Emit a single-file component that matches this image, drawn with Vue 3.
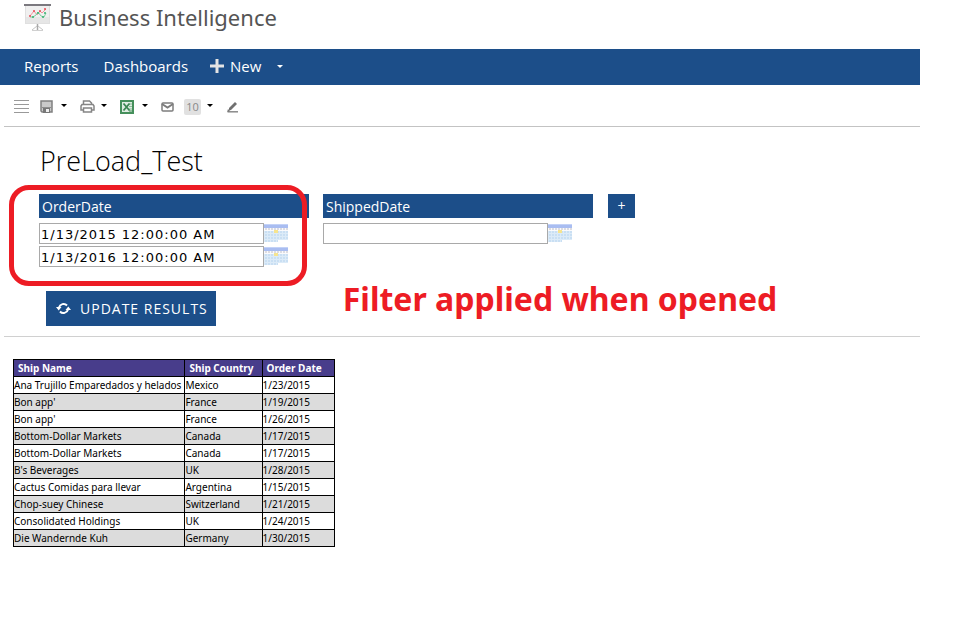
<script setup>
import { ref } from 'vue'

const filters = ref([
  { name: 'OrderDate', values: ['1/13/2015 12:00:00 AM', '1/13/2016 12:00:00 AM'] },
  { name: 'ShippedDate', values: [''] },
])

const columns = ['Ship Name', 'Ship Country', 'Order Date']
const rows = [
  ['Ana Trujillo Emparedados y helados', 'Mexico', '1/23/2015'],
  ["Bon app'", 'France', '1/19/2015'],
  ["Bon app'", 'France', '1/26/2015'],
  ['Bottom-Dollar Markets', 'Canada', '1/17/2015'],
  ['Bottom-Dollar Markets', 'Canada', '1/17/2015'],
  ["B's Beverages", 'UK', '1/28/2015'],
  ['Cactus Comidas para llevar', 'Argentina', '1/15/2015'],
  ['Chop-suey Chinese', 'Switzerland', '1/21/2015'],
  ['Consolidated Holdings', 'UK', '1/24/2015'],
  ['Die Wandernde Kuh', 'Germany', '1/30/2015'],
]
</script>

<template>
  <div class="page">
    <header class="brand">
      <svg class="brand-icon" width="27" height="28" viewBox="0 0 27 28" aria-hidden="true">
        <path d="M13.500 20v7" stroke="#a8a8a8" stroke-width="1.500" />
        <path d="M13 22l-5 4M14 22l5 4" stroke="#c4c4c4" fill="none" />
        <path d="M8 26.500h11" stroke="#d0d0d0" />
        <rect x="1.500" y="1.500" width="24" height="18" fill="#f0f0f0" stroke="#e0e0e0" />
        <path d="M2 13h23v6H2z" fill="#e6e6e6" />
        <rect x="0" y="0" width="27" height="2" fill="#7b797f" />
        <path d="M6 12l4-5 3 4 3-4 2 2 4-4" stroke="#f4929a" fill="none" />
        <path d="M6 13h3l3-2 2-3 3 4 3 1 2-4" stroke="#7fcea0" fill="none" />
        <g fill="#ea4c56"><circle cx="10" cy="7" r="1" /><circle cx="16" cy="7" r="1" /><circle cx="21" cy="5" r="1" /><circle cx="6" cy="12" r="1" /></g>
        <g fill="#38b070"><circle cx="14" cy="9" r="1" /><circle cx="19" cy="13" r="1" /><circle cx="21" cy="9" r="1" /><circle cx="9" cy="13" r="1" /></g>
      </svg>
      <span class="brand-name">Business Intelligence</span>
    </header>

    <nav class="nav">
      <a href="#reports">Reports</a>
      <a href="#dashboards">Dashboards</a>
      <button type="button" class="new">
        <svg width="14" height="14" viewBox="0 0 14 14" aria-hidden="true"><path d="M5.500 0h3v5.500H14v3H8.500V14h-3V8.500H0v-3h5.500z" fill="#e4e4e4" /></svg>
        <span>New</span>
        <svg class="new-caret" width="6" height="3" viewBox="0 0 6 3" aria-hidden="true"><path d="M0 0h6L3 3z" fill="#fff" /></svg>
      </button>
    </nav>

    <div class="toolbar">
      <button type="button" class="tool" aria-label="Field list">
        <svg width="16" height="13" viewBox="0 0 16 13"><path d="M0 .5h15M0 4.500h15M0 8.500h15M0 12.500h15" stroke="#999" /></svg>
      </button>
      <button type="button" class="tool save" aria-label="Save">
        <svg width="13" height="13" viewBox="0 0 13 13">
          <path d="M1 1h11v11H2l-1-1z" fill="#c9c9c9" stroke="#808080" stroke-width="1.500" />
          <path d="M2 7.500h9" stroke="#8d8d8d" />
          <path d="M3 8h7v5H3z" fill="#777" /><path d="M6 9h3v3H6z" fill="#eee" />
        </svg>
        <svg class="caret" width="6" height="3" viewBox="0 0 6 3"><path d="M0 0h6L3 3z" /></svg>
      </button>
      <button type="button" class="tool tight" aria-label="Print">
        <svg width="15" height="13" viewBox="0 0 15 13" fill="none" stroke="#858585" stroke-width="1.500">
          <path d="M3.500 4V1h6l2 2v1" /><path d="M3 10H1V6l1-1.500h11L14 6v4h-2" /><path d="M3.500 8h8v4h-8z" fill="#fff" />
        </svg>
        <svg class="caret" width="6" height="3" viewBox="0 0 6 3"><path d="M0 0h6L3 3z" /></svg>
      </button>
      <button type="button" class="tool" aria-label="Export to Excel">
        <svg width="14" height="14" viewBox="0 0 14 14">
          <rect x="1" y="1" width="12" height="12" fill="#dfece2" stroke="#46905c" stroke-width="2" />
          <path d="M9 4h3M9 6.500h3M9 9h3" stroke="#8fbf9d" />
          <path d="M3.500 3.500l6 7M9.500 3.500l-6 7" stroke="#3a8551" stroke-width="1.800" /><path d="M9 11h3" stroke="#46905c" />
        </svg>
        <svg class="caret" width="6" height="3" viewBox="0 0 6 3"><path d="M0 0h6L3 3z" /></svg>
      </button>
      <button type="button" class="tool" aria-label="Send by e-mail">
        <svg width="13" height="10" viewBox="0 0 13 10" fill="none" stroke="#7d7d7d" stroke-width="1.500"><rect x="1" y="1" width="11" height="8" rx="1" /><path d="M1 2l5.500 3.500L12 2" stroke-width="2" /></svg>
      </button>
      <button type="button" class="tool tight count" aria-label="Results per page">
        <span class="count-value">10</span>
        <svg class="caret" width="6" height="3" viewBox="0 0 6 3"><path d="M0 0h6L3 3z" /></svg>
      </button>
      <button type="button" class="tool" aria-label="Edit design">
        <svg width="13" height="12" viewBox="0 0 13 12"><path d="M3 7l6-6 2 2-6 6-2 .5z" fill="#707070" /><path d="M2 10.800h10" stroke="#8a8a8a" stroke-width="1.500" /><path d="M2 8l2 2-3 1.500z" fill="#777" /></svg>
      </button>
    </div>

    <main class="report">
      <section class="criteria">
        <h1>PreLoad_Test</h1>
        <div class="filters">
          <fieldset v-for="filter in filters" :key="filter.name" class="filter">
            <legend class="filter-name">{{ filter.name }}</legend>
            <div v-for="(value, i) in filter.values" :key="i" class="field">
              <input v-model="filter.values[i]" type="text" :aria-label="filter.name" />
              <button type="button" class="pick" aria-label="Choose date">
                <svg width="24" height="18" viewBox="0 0 24 18">
                  <rect width="24" height="18" fill="#dcebf8" />
                  <rect width="24" height="4" fill="#a9bdf1" />
                  <path d="M0 .5h24" stroke="#c3d2f7" />
                  <path d="M0 4h24v3H0z" fill="#fafafc" />
                  <path d="M1 5h23" stroke="#dcdce2" stroke-width="2" stroke-dasharray="2 1" />
                  <path d="M1 8h23M1 11h23M1 14h23M1 17h13" stroke="#c9dff3" stroke-width="2" stroke-dasharray="2 1" />
                  <path d="M14 16h10v2H14z" fill="#fff" />
                  <rect x="10" y="6" width="4" height="3" fill="#f6e48f" />
                </svg>
              </button>
            </div>
          </fieldset>
          <button type="button" class="add" aria-label="Add filter">+</button>
          <div class="marker"></div>
        </div>
        <div class="actions">
          <button type="button" class="update">
            <svg width="15" height="13" viewBox="0 0 15 13" fill="none" stroke="#fff" stroke-width="2" aria-hidden="true">
              <path d="M3 5.500A4.700 4.700 0 0 1 11 3.500M12 7.500A4.700 4.700 0 0 1 4 9.500" />
              <path d="M0 5h5.500L2.700 8.500zM9.500 8H15l-2.700-3.500z" fill="#fff" stroke="none" />
            </svg>
            <span>UPDATE RESULTS</span>
          </button>
          <p class="note">Filter applied when opened</p>
        </div>
      </section>

      <table class="results">
        <thead>
          <tr><th v-for="column in columns" :key="column" scope="col">{{ column }}</th></tr>
        </thead>
        <tbody>
          <tr v-for="(row, i) in rows" :key="i">
            <td v-for="(cell, j) in row" :key="j">{{ cell }}</td>
          </tr>
        </tbody>
      </table>
    </main>
  </div>
</template>

<style>
body {
  background: #fff;
}
</style>

<style scoped>
.page {
  padding-right: 44px;
  font-family: "Open Sans", "Noto Sans", sans-serif;
  color: #000;
}
button {
  margin: 0;
  padding: 0;
  border: 0;
  background: none;
  font: inherit;
  color: inherit;
  cursor: pointer;
}
svg {
  display: block;
  flex: none;
}
.brand {
  display: flex;
  align-items: flex-start;
  gap: 8px;
  height: 45px;
  padding: 4px 0 0 24px;
}
.brand-name {
  font-family: "Noto Sans", sans-serif;
  font-size: 22px;
  line-height: 26px;
  color: #555;
}
.nav {
  display: flex;
  align-items: center;
  gap: 25px;
  height: 34px;
  padding: 0 0 2px 24px;
  background: #1c4e89;
  color: #fff;
  font-size: 15px;
}
.nav a {
  color: inherit;
  text-decoration: none;
}
.new {
  display: flex;
  align-items: center;
  gap: 6px;
  margin-left: -3px;
}
.new-caret {
  margin-left: 10px;
}
.toolbar {
  display: flex;
  align-items: center;
  gap: 13px;
  height: 39px;
  margin-left: 4px;
  padding: 2px 0 0 10px;
  border-bottom: 1px solid #c3c3c3;
}
.tool {
  display: flex;
  align-items: center;
  gap: 8px;
}
.tool.tight {
  gap: 6px;
}
.tool.save,
.tool.count {
  margin-left: -3px;
}
.caret {
  margin-bottom: 2px;
}
.count-value {
  width: 17px;
  border-radius: 2px;
  background: #e1e1e1;
  color: #888;
  font-size: 11px;
  line-height: 16px;
  text-align: center;
}
.criteria {
  margin-left: 4px;
  padding: 12px 0 10px 36px;
  border-bottom: 1px solid #d0d0d0;
}
h1 {
  margin: 0 0 11px;
  font-size: 27px;
  font-weight: 300;
  line-height: 44px;
}
.filters {
  position: relative;
  display: flex;
  align-items: flex-start;
  gap: 14px;
  margin-left: -1px;
}
.filter {
  display: flex;
  flex-direction: column;
  gap: 2px;
  width: 270px;
  margin: 0;
  padding: 0;
  border: 0;
}
.filter-name {
  box-sizing: border-box;
  width: 100%;
  margin-bottom: 5px;
  padding: 2px 3px 0;
  background: #1c4e89;
  color: #fff;
  font-size: 14px;
  line-height: 22px;
}
.field {
  display: flex;
}
.field input {
  box-sizing: border-box;
  width: 225px;
  height: 21px;
  margin: 0;
  padding: 1px 1px 0;
  border: 1px solid #a9a9a9;
  border-radius: 0;
  background: #fff;
  color: #000;
  font-family: "DejaVu Sans", sans-serif;
  font-size: 13px;
  letter-spacing: 1px;
}
.pick {
  display: flex;
  align-items: flex-start;
  padding-top: 1px;
}
.add {
  width: 27px;
  height: 24px;
  margin-left: 1px;
  background: #1c4e89;
  color: #fff;
  font-size: 14px;
  line-height: 22px;
}
.marker {
  position: absolute;
  top: -9px;
  left: -30px;
  box-sizing: border-box;
  width: 298px;
  height: 101px;
  border: 5px solid #ed1c24;
  border-radius: 20px;
  pointer-events: none;
}
.actions {
  display: flex;
  align-items: flex-start;
  gap: 127px;
  margin-top: 24px;
  padding-left: 6px;
}
.update {
  display: flex;
  align-items: center;
  gap: 9px;
  height: 35px;
  padding: 0 8px 0 10px;
  background: #1c4e89;
  color: #fff;
  font-size: 14px;
  letter-spacing: 1px;
}
.note {
  margin: 0;
  color: #ed1c24;
  font-family: "Noto Sans", sans-serif;
  font-size: 32px;
  font-weight: 700;
  line-height: 16px;
}
.results {
  margin: 22px 0 0 13px;
  border-collapse: collapse;
  font-family: "Noto Sans", sans-serif;
  font-size: 10px;
  line-height: 15px;
}
.results th,
.results td {
  height: 15px;
  padding: 1px 0 0;
  border: 1px solid #000;
  text-align: left;
  white-space: nowrap;
}
.results td:first-child {
  padding-right: 3px;
}
.results th {
  padding: 1px 8px 0 4px;
  background: #483d8b;
  color: #fff;
}
.results th:last-child {
  padding-right: 12px;
}
.results tbody tr:nth-child(even) {
  background: #dcdcdc;
}
</style>
